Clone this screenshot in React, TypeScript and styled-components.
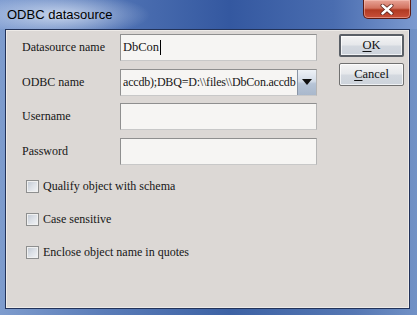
import React from "react";
import styled, { createGlobalStyle } from "styled-components";

const GlobalStyle = createGlobalStyle`
  html, body {
    margin: 0;
    padding: 0;
    width: 417px;
    height: 315px;
    overflow: hidden;
    background: #4a6aa6;
  }
`;

const serif = `"Liberation Serif", "Times New Roman", "DejaVu Serif", serif`;

const Window = styled.div`
  width: 417px;
  height: 315px;
  display: flex;
  flex-direction: column;
  background: linear-gradient(90deg, #7e9ccd 0%, #5a7cb8 25%, #3d62a4 55%, #5577b3 85%, #7191c6 100%);
  box-sizing: border-box;
`;

const TitleBar = styled.div`
  height: 29px;
  flex: 0 0 29px;
  display: flex;
  justify-content: space-between;
  align-items: flex-start;
  padding: 0 6px 0 7px;
  box-sizing: border-box;
  background:
    radial-gradient(ellipse 90px 22px at 60px 15px, rgba(230, 238, 250, 0.75), rgba(230, 238, 250, 0) 100%),
    linear-gradient(90deg, #7d9bd0 0%, #4d70b2 30%, #3458a0 55%, #4a6db0 80%, #7c9ad0 100%);
`;

const Title = styled.span`
  font-family: "Liberation Sans", Arial, sans-serif;
  font-size: 13px;
  line-height: 29px;
  color: #000;
`;

const CloseButton = styled.div`
  width: 48px;
  height: 19px;
  box-sizing: border-box;
  border: 1px solid #5a1a14;
  border-top: none;
  border-radius: 0 0 5px 5px;
  background: linear-gradient(180deg, #e8a497 0%, #d2725f 45%, #b13a22 55%, #c9503a 100%);
  box-shadow: inset 0 0 0 1px rgba(255, 210, 200, 0.45);
  display: flex;
  align-items: center;
  justify-content: center;
`;

const Client = styled.div`
  flex: 1;
  margin: 0 7px 6px 5px;
  background: #dcd8d5;
  border: 1px solid #22335a;
  box-shadow: inset 0 0 0 1px #eeebe8;
  display: flex;
  padding: 4px 5px 0 16px;
  box-sizing: border-box;
  font-family: ${serif};
  font-size: 12px;
  color: #161616;
`;

const Main = styled.div`
  display: flex;
  flex-direction: column;
`;

const Form = styled.div`
  display: grid;
  grid-template-columns: 98px 197px;
  grid-auto-rows: 27px;
  row-gap: 7.7px;
  align-items: center;
`;

const Label = styled.span`
  font-family: ${serif};
  font-size: 12px;
  line-height: 27px;
`;

const Field = styled.div`
  height: 27px;
  box-sizing: border-box;
  border: 1px solid #8f8f8f;
  border-right-color: #b5b5b5;
  border-bottom-color: #c8c8c8;
  background: #f6f5f3;
  display: flex;
  align-items: center;
  padding-left: 2px;
  overflow: hidden;
  white-space: nowrap;
  font-family: ${serif};
  font-size: 12.5px;
`;

const Caret = styled.span`
  display: inline-block;
  width: 1px;
  height: 15px;
  background: #000;
  margin-left: 1px;
`;

const ComboText = styled.div`
  flex: 1;
  min-width: 0;
  overflow: hidden;
  white-space: nowrap;
  font-size: 12px;
  letter-spacing: -0.2px;
`;

const DropButton = styled.div`
  width: 19px;
  height: 100%;
  flex: 0 0 19px;
  box-sizing: border-box;
  border-left: 1px solid #8a95a5;
  background: linear-gradient(180deg, #eef2f7 0%, #d3dce8 45%, #b6c4d6 55%, #a9b8cc 100%);
  display: flex;
  align-items: center;
  justify-content: center;
`;

const Options = styled.div`
  display: flex;
  flex-direction: column;
  gap: 13px;
  margin: 11px 0 0 4px;
`;

const Option = styled.label`
  display: flex;
  align-items: center;
  gap: 4px;
  height: 20px;
  font-family: ${serif};
`;

const Box = styled.span`
  width: 13px;
  height: 13px;
  box-sizing: border-box;
  border: 1px solid #8e8f8f;
  background: linear-gradient(135deg, #bfc7d2 0%, #dde1e7 50%, #f3f4f6 100%);
  box-shadow: inset 0 0 0 1px #f0f0f0;
`;

const Side = styled.div`
  display: flex;
  flex-direction: column;
  gap: 6px;
  margin-left: 22px;
`;

const Button = styled.div<{ $default?: boolean }>`
  width: 65px;
  height: 23px;
  box-sizing: border-box;
  border: ${(p) => (p.$default ? "2px solid #5a5f66" : "1px solid #707070")};
  border-radius: 2px;
  background: linear-gradient(180deg, #f4f4f4 0%, #e6e8eb 45%, #d3d8df 55%, #cdd3db 100%);
  box-shadow: inset 0 0 0 1px rgba(255, 255, 255, 0.7);
  display: flex;
  align-items: center;
  justify-content: center;
  color: #111;
  font-family: ${serif};
  font-size: 12.5px;
  u {
    text-underline-offset: 2px;
  }
`;

const CloseIcon = () => (
  <svg width="14" height="11" viewBox="0 0 14 11">
    <path d="M2.5 1.5 L11.5 9.5 M11.5 1.5 L2.5 9.5" stroke="#5a1f18" strokeWidth="4" fill="none" strokeLinecap="round" />
    <path d="M2.5 1.5 L11.5 9.5 M11.5 1.5 L2.5 9.5" stroke="#ffffff" strokeWidth="2.4" fill="none" strokeLinecap="round" />
  </svg>
);

const Arrow = () => (
  <svg width="10" height="6" viewBox="0 0 10 6">
    <path d="M0 0 H10 L5 6 Z" fill="#111" />
  </svg>
);

const App = () => {
  return (
    <>
      <GlobalStyle />
      <Window>
        <TitleBar>
          <Title>ODBC datasource</Title>
          <CloseButton>
            <CloseIcon />
          </CloseButton>
        </TitleBar>
        <Client>
          <Main>
            <Form>
              <Label>Datasource name</Label>
              <Field>
                DbCon
                <Caret />
              </Field>
              <Label>ODBC name</Label>
              <Field>
                <ComboText>accdb);DBQ=D:\\files\\DbCon.accdb</ComboText>
                <DropButton>
                  <Arrow />
                </DropButton>
              </Field>
              <Label>Username</Label>
              <Field />
              <Label>Password</Label>
              <Field />
            </Form>
            <Options>
              <Option>
                <Box />
                Qualify object with schema
              </Option>
              <Option>
                <Box />
                Case sensitive
              </Option>
              <Option>
                <Box />
                Enclose object name in quotes
              </Option>
            </Options>
          </Main>
          <Side>
            <Button $default>
              <span>
                <u>O</u>K
              </span>
            </Button>
            <Button>
              <span>
                <u>C</u>ancel
              </span>
            </Button>
          </Side>
        </Client>
      </Window>
    </>
  );
};

export default App;
